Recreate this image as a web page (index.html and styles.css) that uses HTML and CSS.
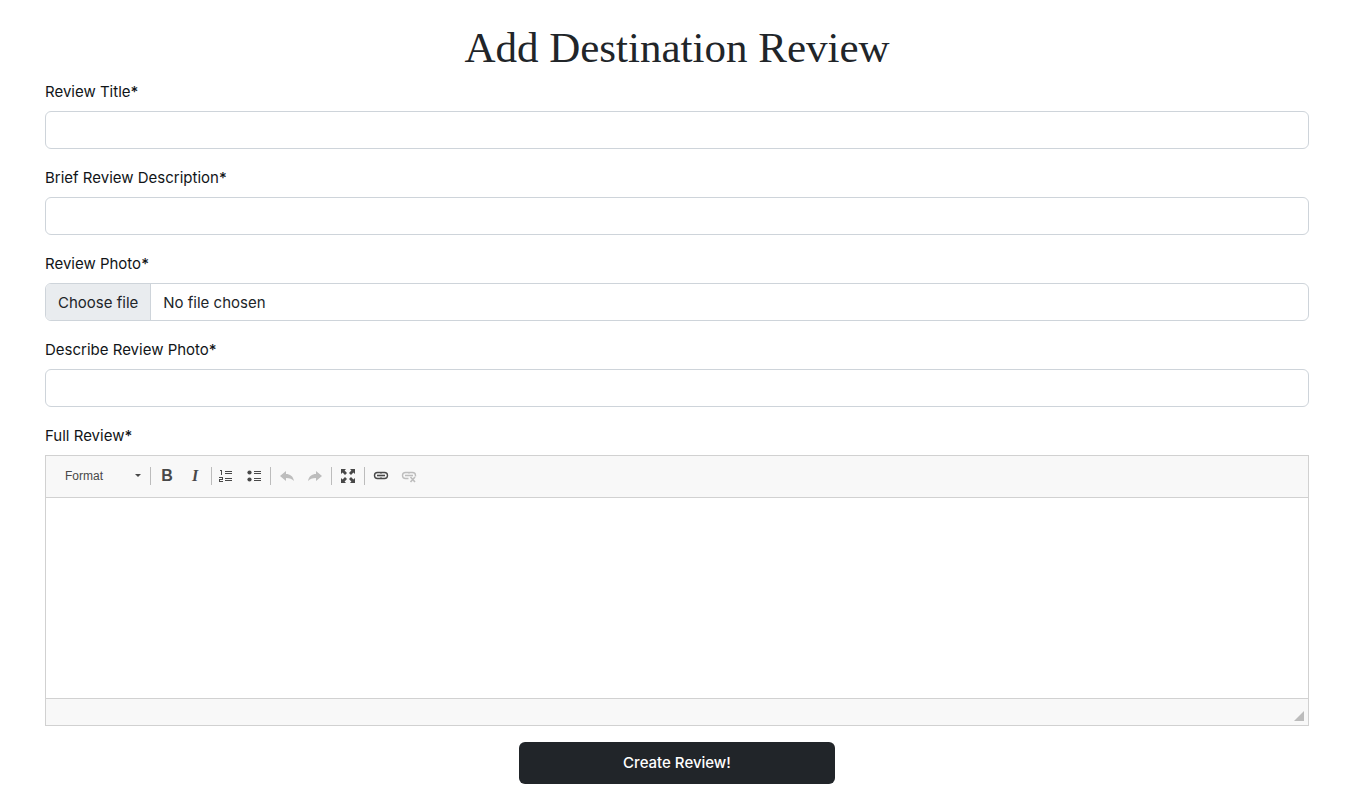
FILE: index.html
```html
<!DOCTYPE html>
<html lang="en">
<head>
<meta charset="utf-8">
<meta name="viewport" content="width=device-width, initial-scale=1">
<title>Add Destination Review</title>
<link rel="stylesheet" href="styles.css">
</head>
<body>
<main class="page">
  <h1 class="page-title">Add Destination Review</h1>
  <form class="review-form">
    <div class="field">
      <label class="field-label" for="title">Review Title<span class="required">*</span></label>
      <input class="text-input" id="title" type="text">
    </div>
    <div class="field">
      <label class="field-label" for="brief">Brief Review Description<span class="required">*</span></label>
      <input class="text-input" id="brief" type="text">
    </div>
    <div class="field">
      <label class="field-label" for="photo">Review Photo<span class="required">*</span></label>
      <div class="file-input">
        <span class="file-button">Choose file</span>
        <span class="file-name">No file chosen</span>
        <input class="file-native" id="photo" type="file">
      </div>
    </div>
    <div class="field">
      <label class="field-label" for="alt">Describe Review Photo<span class="required">*</span></label>
      <input class="text-input" id="alt" type="text">
    </div>
    <div class="field">
      <label class="field-label" for="full">Full Review<span class="required">*</span></label>
      <div class="editor">
        <div class="toolbar" role="toolbar" aria-label="Editor toolbar">
          <button class="format" type="button">Format<svg class="caret" width="6" height="3" viewBox="0 0 6 3"><path d="M0 0h6L3 3z"/></svg></button>
          <div class="group">
            <button class="tool bold" type="button">B</button>
            <button class="tool italic" type="button">I</button>
          </div>
          <div class="group lists">
            <button class="tool" type="button" aria-label="Numbered list">
              <svg class="icon" viewBox="0 0 16 16"><path d="M2 2h2v5H3V3H2zM1 9h4v3H2v1h3v1H1v-3h3v-1H1zM7 3h7v1H7zM7 5h7v1H7zM7 10h7v1H7zM7 12h7v1H7z"/></svg>
            </button>
            <button class="tool" type="button" aria-label="Bulleted list">
              <svg class="icon" viewBox="0 0 16 16"><circle cx="3.500" cy="4.500" r="2.100"/><circle cx="3.500" cy="11.500" r="2.100"/><path d="M8 3h7v1H8zM8 5h7v1H8zM8 10h7v1H8zM8 12h7v1H8z"/></svg>
            </button>
          </div>
          <div class="group">
            <button class="tool" type="button" disabled aria-label="Undo">
              <svg class="icon" viewBox="0 0 16 16"><path d="M1 8l6-5v3c4 0 7 2 8 7-2-2-4-3-8-3v3z"/></svg>
            </button>
            <button class="tool" type="button" disabled aria-label="Redo">
              <svg class="icon" viewBox="0 0 16 16"><path d="M15 8L9 3v3c-4 0-7 2-8 7 2-2 4-3 8-3v3z"/></svg>
            </button>
          </div>
          <div class="group">
            <button class="tool" type="button" aria-label="Maximize">
              <svg class="icon" viewBox="0 0 16 16"><path d="M1 1h5L4.600 2.600 7 5 5 7 2.600 4.600 1 6zM15 1v5l-1.600-1.400L11 7 9 5l2.400-2.400L10 1zM1 15v-5l1.600 1.400L5 9l2 2-2.400 2.400L6 15zM15 15h-5l1.400-1.600L9 11l2-2 2.400 2.400L15 10z"/></svg>
            </button>
          </div>
          <div class="group">
            <button class="tool" type="button" aria-label="Link">
              <svg class="icon line" viewBox="0 0 16 16"><path d="M8.500 9.500l-1 1h-3a3 3 0 0 1 0-6h3l1 1M7.500 5.500l1-1h3a3 3 0 0 1 0 6h-3l-1-1" stroke-width="1.400"/><path d="M4 7.500h8" stroke-width="1.600"/></svg>
            </button>
            <button class="tool" type="button" disabled aria-label="Unlink">
              <svg class="icon line" viewBox="0 0 16 16"><path d="M7.500 10.500h-3a3 3 0 0 1 0-6h3l1 1M7.500 5.500l1-1h3a3 3 0 0 1 3 3v1" stroke-width="1.400"/><path d="M4 7.500h8M9.500 9l4.500 5M14 9l-4.500 5" stroke-width="1.600"/></svg>
            </button>
          </div>
        </div>
        <textarea class="editor-area" id="full"></textarea>
        <div class="editor-footer"><svg class="grip" width="10" height="10" viewBox="0 0 10 10"><path d="M10 0v10H0z"/></svg></div>
      </div>
    </div>
    <button class="submit" type="submit">Create Review!</button>
  </form>
</main>
</body>
</html>
```
FILE: styles.css
```css
* { box-sizing: border-box; }
body {
  margin: 0;
  background: #fff;
  color: #212529;
  font: 16px/24px Inter, "Liberation Sans", sans-serif;
}
.page { padding: 24px 60px 16px 45px; }
.page-title {
  margin: 0 0 7px;
  font: 400 43px/48px "Liberation Serif", serif;
  text-align: center;
}
.review-form { display: flex; flex-direction: column; gap: 16px; }
.field { display: flex; flex-direction: column; gap: 6px; }
.field-label { font-size: 15px; line-height: 26px; color: #111518; }
.required { font-weight: 500; }
.text-input, .file-input {
  width: 100%;
  height: 38px;
  border: 1px solid #ced4da;
  border-radius: 6px;
  background: #fff;
}
.text-input { padding: 6px 12px; font: inherit; color: inherit; }
.file-input {
  position: relative;
  display: flex;
  overflow: hidden;
  line-height: 38px;
  font-size: 15px;
}
.file-button {
  padding: 0 12px;
  background: #e9ecef;
  border-right: 1px solid #ced4da;
}
.file-name { padding: 0 12px; }
.file-native { position: absolute; inset: 0; width: 100%; opacity: 0; }
.editor { border: 1px solid #d1d1d1; }
.toolbar {
  display: flex;
  align-items: center;
  height: 42px;
  padding: 0 12px 2px;
  background: #f8f8f8;
  border-bottom: 1px solid #d1d1d1;
}
.format {
  display: flex;
  align-items: center;
  justify-content: space-between;
  width: 90px;
  height: 28px;
  padding: 0 7px;
  border: 0;
  background: none;
  color: #484848;
  font: 12px/20px "Liberation Sans", Arial, sans-serif;
}
.caret { fill: #484848; }
.group { display: flex; align-items: center; margin-left: 2px; }
.group::before { content: ""; width: 1px; height: 18px; margin-right: 2px; background: #bcbcbc; }
.lists::before { margin-right: 0; }
.tool {
  display: grid;
  place-items: center;
  width: 28px;
  height: 28px;
  padding: 0;
  border: 0;
  background: none;
  color: #484848;
}
.tool:disabled { color: #bdbdbd; }
.bold { font: 700 16px/28px "Liberation Sans", sans-serif; }
.italic { font: italic 700 16px/28px "Liberation Serif", serif; }
.icon { width: 16px; height: 16px; fill: currentColor; }
.line { fill: none; stroke: currentColor; }
.editor-area {
  display: block;
  width: 100%;
  height: 200px;
  padding: 16px;
  border: 0;
  resize: none;
  font: inherit;
}
.editor-footer {
  display: flex;
  align-items: flex-end;
  justify-content: flex-end;
  height: 27px;
  padding: 4px;
  background: #f8f8f8;
  border-top: 1px solid #d1d1d1;
}
.grip { fill: #bcbcbc; }
.submit {
  align-self: center;
  width: 25%;
  height: 42px;
  border: 0;
  border-radius: 6px;
  background: #212529;
  color: #fff;
  font: 500 15px/24px Inter, "Liberation Sans", sans-serif;
}
```
